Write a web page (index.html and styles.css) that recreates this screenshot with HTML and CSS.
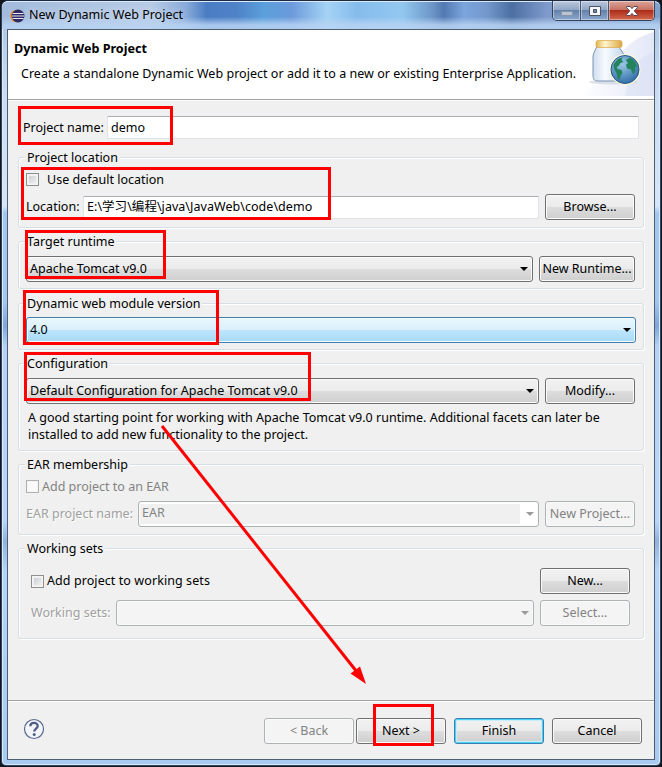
FILE: index.html
```html
<!DOCTYPE html>
<html lang="en">
<head>
    <meta charset="UTF-8">
    <meta name="viewport" content="width=device-width, initial-scale=1.0">
    <title>New Dynamic Web Project</title>
    <link rel="stylesheet" href="styles.css">
</head>
<body>
    <div class="window">
        <div class="titlebar">
            <svg class="app-icon" width="15" height="14" viewBox="0 0 15 14">
                <circle cx="6.5" cy="7" r="6.3" fill="#f0942c"/>
                <circle cx="8" cy="7" r="6.4" fill="#2f2a63"/>
                <path d="M2.500 4.500h11M2 7h12M2.500 9.500h11" stroke="#e8e8f4" stroke-width="1.200"/>
            </svg>
            <span class="window-title">New Dynamic Web Project</span>
            <div class="window-buttons">
                <span class="win-btn minimize"><svg width="12" height="5"><rect x=".5" y=".5" width="11" height="4" fill="#b9c3d2" stroke="#8793a8"/></svg></span>
                <span class="win-btn maximize"><svg width="12" height="10"><path d="M.5.5h11v9H.5zM4.500 3.500v3h3v-3z" fill="#f4f5f8" fill-rule="evenodd" stroke="#4b5364"/></svg></span>
                <span class="win-btn close"><svg width="12" height="10"><path d="M.7.5h3.500L6 2.600 7.800.5h3.500v1.200L8.300 5l3 3.300v1.200H7.800L6 7.400 4.200 9.500H.7V8.300l3-3.300-3-3.300z" fill="#fff" stroke="#5a4650"/></svg></span>
            </div>
        </div>

        <div class="client">
            <div class="header">
                <div class="header-text">
                    <h1>Dynamic Web Project</h1>
                    <p>Create a standalone Dynamic Web project or add it to a new or existing Enterprise Application.</p>
                </div>
                <svg class="banner" width="75" height="66" viewBox="0 0 75 66">
                    <defs>
                        <linearGradient id="wash" x1="0" x2="1"><stop offset="0" stop-color="#fff"/><stop offset="1" stop-color="#e3e8f7"/></linearGradient>
                        <linearGradient id="lid" x1="0" x2="1"><stop offset="0" stop-color="#e3b650"/><stop offset=".35" stop-color="#fff5cc"/><stop offset="1" stop-color="#dba741"/></linearGradient>
                        <linearGradient id="glass" x1="0" x2="1"><stop offset="0" stop-color="#cfdeef"/><stop offset=".4" stop-color="#f8fbfe"/><stop offset="1" stop-color="#c4d6ea"/></linearGradient>
                        <radialGradient id="sea" cx=".4" cy=".3" r=".75"><stop offset="0" stop-color="#9dc8e6"/><stop offset="1" stop-color="#2c6ba6"/></radialGradient>
                    </defs>
                    <path d="M75 2C52 8 38 24 34 40 26 48 14 58 0 66h75z" fill="url(#wash)"/>
                    <path d="M75 22C58 26 50 44 46 66h29z" fill="#d5dcf2" opacity=".4"/>
                    <ellipse cx="34" cy="52" rx="24" ry="2.500" fill="#b9bfce" opacity=".45"/>
                    <path d="M18 16h22c1 4 5 6 5 11v18c0 4-3 6-6 6H19c-4 0-5-2-5-6V27c0-5 3-7 4-11z" fill="url(#glass)" stroke="#7893b7"/>
                    <rect x="17" y="10.500" width="26" height="7" rx="2" fill="url(#lid)" stroke="#d8a848" stroke-width=".7"/>
                    <circle cx="46" cy="39.500" r="15.500" fill="#fbf7d8"/>
                    <circle cx="46" cy="39.500" r="14" fill="url(#sea)" stroke="#245c8b"/>
                    <path d="M34.500 35c2-4 5-7 9-7.500l-1 2.500 2 2-3 1-2 3-2 1 1 2 4 1 1 3-2 3-1 4-2-2-1-5-2-3z" fill="#23845c"/>
                    <path d="M47 30l4-2.500c4 2 6 5 7 9l-2 1 .5 3-2.500 4-2-5-4-1-1-4 2-1z" fill="#23845c"/>
                </svg>
            </div>

            <div class="content">
                <div class="row name-row">
                    <label>Project name:</label>
                    <div class="input">demo</div>
                </div>

                <div class="group location">
                    <h2>Project location</h2>
                    <div class="row check-row"><span class="checkbox"></span><label>Use default location</label></div>
                    <div class="row location-row">
                        <label>Location:</label>
                        <div class="input path">E:\学习\编程\java\JavaWeb\code\demo</div>
                        <div class="button">Browse...</div>
                    </div>
                </div>

                <div class="group runtime">
                    <h2>Target runtime</h2>
                    <div class="row">
                        <div class="combo">Apache Tomcat v9.0</div>
                        <div class="button wide">New Runtime...</div>
                    </div>
                </div>

                <div class="group version">
                    <h2>Dynamic web module version</h2>
                    <div class="row">
                        <div class="combo active">4.0</div>
                    </div>
                </div>

                <div class="group configuration">
                    <h2>Configuration</h2>
                    <div class="row">
                        <div class="combo">Default Configuration for Apache Tomcat v9.0</div>
                        <div class="button">Modify...</div>
                    </div>
                    <p class="hint">A good starting point for working with Apache Tomcat v9.0 runtime. Additional facets can later be<br>installed to add new functionality to the project.</p>
                </div>

                <div class="group ear">
                    <h2>EAR membership</h2>
                    <div class="row check-row disabled"><span class="checkbox"></span><label>Add project to an EAR</label></div>
                    <div class="row ear-row disabled">
                        <label class="etched">EAR project name:</label>
                        <div class="combo editable"><span>EAR</span></div>
                        <div class="button">New Project...</div>
                    </div>
                </div>

                <div class="group sets">
                    <h2>Working sets</h2>
                    <div class="row add-row">
                        <span class="checkbox"></span><label>Add project to working sets</label>
                        <div class="button">New...</div>
                    </div>
                    <div class="row sets-row disabled">
                        <label class="etched">Working sets:</label>
                        <div class="combo"></div>
                        <div class="button">Select...</div>
                    </div>
                </div>
            </div>

            <div class="footer">
                <svg class="help" width="22" height="22" viewBox="0 0 22 22">
                    <circle cx="11" cy="11" r="9.500" fill="#f4f5f8" stroke="#596a90" stroke-width="1.200"/>
                    <path d="M7.300 8.300C7.300 3.800 14.700 3.900 14.700 7.900 14.700 10.500 11.200 10.600 11.200 13.600" fill="none" stroke="#4d5e86" stroke-width="2.300"/>
                    <circle cx="11.200" cy="16.600" r="1.500" fill="#4d5e86"/>
                </svg>
                <div class="button back disabled">&lt; Back</div>
                <div class="button next">Next &gt;</div>
                <div class="button finish">Finish</div>
                <div class="button">Cancel</div>
            </div>
        </div>
    </div>

    <!-- red annotations drawn over the dialog -->
    <svg class="marks" width="662" height="767" viewBox="0 0 662 767">
        <g fill="none" stroke="#f00" stroke-width="3">
            <rect x="19.500" y="107.500" width="152" height="36"/>
            <rect x="22.500" y="168.500" width="307" height="50"/>
            <rect x="26.500" y="231.500" width="138" height="46"/>
            <rect x="24.500" y="291.500" width="193" height="52"/>
            <rect x="25.500" y="353.500" width="284" height="46"/>
            <rect x="374.500" y="705.500" width="58" height="39"/>
            <path d="M162 426L357 672"/>
        </g>
        <path d="M366 684L350.500 673.500 360 666.500z" fill="#f00"/>
    </svg>
</body>
</html>
```
FILE: styles.css
```css
* {
    box-sizing: border-box;
}
body {
    margin: 0;
    width: 662px;
    height: 767px;
    overflow: hidden;
    background: #11161f;
    font-family: "Noto Sans", "Noto Sans CJK SC", sans-serif;
    font-size: 12.5px;
    line-height: 18px;
    color: #000;
}
h1, h2, p {
    margin: 0;
}
.window {
    width: 660px;
    height: 766px;
    margin-left: 1px;
    padding: 0 5px 6px;
    border: 1px solid #33435c;
    border-top-color: #1c2940;
    border-radius: 7px 7px 5px 5px;
    background: linear-gradient(#a9c3e4 0, #c9dcf2 90px, #d5e6fa 205px, #a3c7f0 212px, #a3c7f0 300px, #7da6dc 325px, #b3d2f6 345px, #b7d6fa 520px, #92b2de 540px, #b4d4f8 570px, #a9caf0 100%);
    box-shadow: inset 0 0 0 1px #dcebfb;
}

/* title bar */
.titlebar {
    display: flex;
    height: 28px;
    margin: 0 -5px;
    padding-left: 8px;
    border-top: 1px solid #dcebfb;
    border-radius: 6px 6px 0 0;
    background: linear-gradient(rgba(185,212,243,0) 55%, rgba(185,212,243,.85) 85%), linear-gradient(90deg, #a3bbdc 0, #b7cbe6 150px, #86a9d8 185px, #4a7cc3 205px, #4f83c8 235px, #5b9fdb 262px, #6c9adb 290px, #a4d3f5 325px, #86bcec 355px, #92c8f0 400px, #6d96c8 430px, #5379b3 442px, #7ba5dc 462px, #7498cc 485px, #4c6fa2 510px, #7f9acc 545px, #7ea2d0 100%);
}
.app-icon {
    margin-top: 7px;
}
.window-title {
    margin: 4px 0 0 4px;
    text-shadow: 0 0 6px #dfe9f6;
}
.window-buttons {
    display: flex;
    width: 103px;
    height: 20px;
    margin-top: -1px;
    margin-left: auto;
    margin-right: 5px;
    border: 1px solid #36435b;
    border-top: 0;
    border-radius: 0 0 5px 5px;
    overflow: hidden;
}
.win-btn {
    display: flex;
    align-items: center;
    justify-content: center;
    width: 28px;
    border-right: 1px solid #47566f;
    background: linear-gradient(#b9c8dc 0, #8fa5c3 48%, #6582aa 50%, #8ba8cd);
    box-shadow: inset 0 0 0 1px rgba(255,255,255,.4);
}
.win-btn.minimize {
    padding-top: 5px;
}
.win-btn.close {
    flex: 1;
    border-right: 0;
    background: linear-gradient(#dba59b 0, #c66f60 48%, #ad2c1a 50%, #d2694d);
}

/* dialog area */
.client {
    display: flex;
    flex-direction: column;
    height: 731px;
    border: 1px solid #4f5d70;
    background: #f0f0f0;
}
.header {
    display: flex;
    justify-content: space-between;
    height: 70px;
    padding: 10px 0 0 6px;
    border-bottom: 1px solid #a0a0a0;
    background: #fff;
    flex: none;
}
.header-text {
    min-width: 0;
}
.header h1 {
    font-size: 12.6px;
    line-height: 18px;
}
.header p {
    margin: 7px 0 0 7px;
    letter-spacing: .03px;
    white-space: nowrap;
}
.banner {
    margin-top: -10px;
    flex: none;
}
.content {
    flex: 1;
    padding: 15px 10px 0;
    border-top: 1px solid #fff;
}
.row {
    display: flex;
    align-items: center;
}
label {
    flex: none;
    white-space: nowrap;
}
.input {
    flex: 1;
    height: 23px;
    padding: 2px 0 0 3px;
    border: 1px solid #e2e3ea;
    border-top-color: #abadb3;
    border-radius: 1px;
    background: #fff;
    white-space: nowrap;
}
.input.path {
    padding-top: 1px;
    letter-spacing: .04px;
}
.name-row {
    height: 23px;
    padding: 0 5px;
}
.name-row label {
    width: 84px;
}
.group {
    height: 71px;
    margin-top: 13px;
    padding: 0 8px 0 7px;
    border: 1px solid #d5dfe5;
    border-radius: 3px;
    box-shadow: 1px 1px 0 #fff, inset 1px 1px 0 #fff;
}
.group h2 {
    width: max-content;
    height: 18px;
    margin: -10px 0 0 -1px;
    padding: 0 2px;
    background: #f0f0f0;
    font-size: 12.5px;
    font-weight: normal;
    line-height: 20px;
}
.button {
    flex: none;
    width: 90px;
    height: 26px;
    border: 1px solid #707070;
    border-radius: 3px;
    background: linear-gradient(#f2f2f2 0, #ebebeb 48%, #dddddd 50%, #cfcfcf);
    box-shadow: inset 0 0 0 1px #fafafa;
    line-height: 24px;
    text-align: center;
    white-space: nowrap;
}
.button.wide {
    width: 96px;
}
.combo {
    display: flex;
    flex: 1;
    align-items: center;
    justify-content: space-between;
    height: 26px;
    margin-right: 6px;
    padding: 0 4px 1px 3px;
    border: 1px solid #707070;
    border-radius: 3px;
    background: linear-gradient(#f2f2f2 0, #ebebeb 48%, #dddddd 50%, #cfcfcf);
    box-shadow: inset 0 0 0 1px #fafafa;
    white-space: nowrap;
}
.combo::after {
    content: "";
    margin-left: auto;
    border: 4px solid transparent;
    border-top-color: #000;
    border-bottom: 0;
}
.combo.active {
    margin-right: -1px;
    border-color: #3c7fb1;
    background: linear-gradient(#eaf6fd 0, #d9f0fc 48%, #bee6fd 50%, #a7d9f5);
}
.checkbox {
    flex: none;
    width: 13px;
    height: 13px;
    border: 1px solid #8e8f8f;
    background: linear-gradient(135deg, #c4c8cf, #f6f6f6);
    background-clip: content-box;
    padding: 2px;
    box-shadow: inset 0 0 0 1px #f4f4f4;
}

/* groups */
.location {
    margin-top: 18px;
}
.check-row {
    height: 18px;
    margin-top: 4px;
}
.check-row label {
    margin-left: 3px;
    line-height: 20px;
}
.location .check-row label {
    margin-left: 8px;
}
.location-row {
    margin-top: 6px;
}
.location-row label {
    width: 57px;
}
.location-row .button {
    margin-left: 6px;
}
.runtime {
    height: 48px;
}
.runtime .row {
    margin-top: 6px;
}
.version {
    height: 47px;
    margin-top: 14px;
}
.version .row {
    margin-top: 5px;
}
.configuration {
    height: 88px;
}
.configuration .row {
    margin-top: 6px;
}
.hint {
    margin: 5px 0 0 2px;
    line-height: 17px;
    white-space: nowrap;
}
.check-row label {
    padding-top: 1px;
}
.ear-row {
    margin-top: 6px;
}
.ear-row label {
    width: 112px;
}
.sets {
    height: 91px;
}
.add-row {
    margin: 11px 5px 0;
}
.add-row label {
    margin-left: 3px;
    letter-spacing: .08px;
}
.add-row .button {
    margin-left: auto;
}
.sets-row {
    margin: 6px 5px 0;
}
.sets-row label {
    width: 85px;
}

/* disabled controls */
.disabled label {
    color: #838383;
}
.disabled .etched {
    color: #a0a0a0;
    text-shadow: 1px 1px 0 #fff;
}
.disabled .button,
.button.disabled,
.disabled .combo {
    border-color: #adb2b5;
    background: #f4f4f4;
    color: #838383;
}
.disabled .checkbox {
    border-color: #b1b1b1;
    background: #fafafa;
}
.disabled .combo::after {
    border-top-color: #9a9a9a;
}
.disabled .editable {
    padding: 0 4px 0 1px;
    background: #fff;
}
.editable span {
    width: 380px;
    height: 20px;
    padding-left: 2px;
    background: #f0f0f0;
    line-height: 18px;
}

/* bottom buttons */
.footer {
    display: flex;
    flex: none;
    height: 59px;
    padding: 17px 12px 0 15px;
    border-top: 1px solid #a0a0a0;
    box-shadow: inset 0 1px 0 #fff;
}
.help {
    margin-right: auto;
}
.back {
    margin-right: 2px;
}
.next,
.finish {
    margin-right: 8px;
}
.finish {
    border-color: #3c7fb1;
    box-shadow: inset 0 0 0 1px #48d0f5, inset 0 0 0 2px #c5effa;
}
.marks {
    position: absolute;
    top: 0;
    left: 0;
}
```
